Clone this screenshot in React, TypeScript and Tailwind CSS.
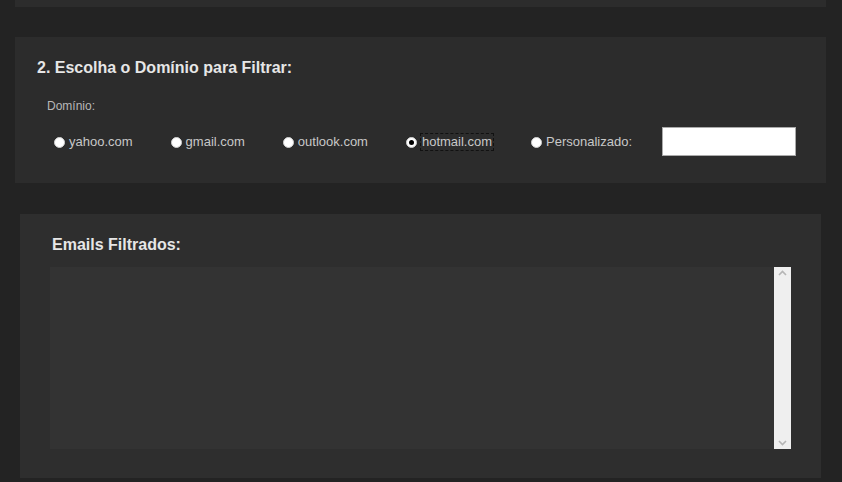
import React from "react";

const domains = [
  { label: "yahoo.com", checked: false },
  { label: "gmail.com", checked: false },
  { label: "outlook.com", checked: false },
  { label: "hotmail.com", checked: true },
  { label: "Personalizado:", checked: false },
];

function Radio({ checked }: { checked: boolean }) {
  return (
    <span className="w-[11px] h-[11px] rounded-full bg-white border border-[#d0d0d0] flex items-center justify-center shrink-0">
      {checked && <span className="w-[5px] h-[5px] rounded-full bg-black" />}
    </span>
  );
}

export default function App() {
  return (
    <div
      className="w-[842px] h-[482px] bg-[#232323] overflow-hidden flex flex-col"
      style={{ fontFamily: '"Liberation Sans", Arial, sans-serif' }}
    >
      <div className="ml-[15px] w-[811px] h-[7px] bg-[#2c2c2c] shrink-0" />
      <div className="ml-[15px] mt-[30px] w-[811px] h-[146px] bg-[#2c2c2c] pt-[21px] shrink-0 flex flex-col">
        <div className="ml-[22px] text-[16px] leading-[20px] font-bold text-[#e6e6e6]">
          2. Escolha o Domínio para Filtrar:
        </div>
        <div className="ml-[32px] mt-[20px] text-[12px] leading-[16px] text-[#b8b8b8]">Domínio:</div>
        <div className="flex items-start mt-[13px]">
          {domains.map((d, i) => (
            <div key={d.label} className={`flex items-center mt-[7px] h-[16px] ${i === 0 ? "ml-[39px]" : "ml-[38px]"}`}>
              <Radio checked={d.checked} />
              <span
                className={`ml-[4px] text-[13px] leading-[16px] text-[#c8c8c8] ${
                  d.checked ? "outline-1 outline-dashed outline-[#111] px-[1px]" : ""
                }`}
              >
                {d.label}
              </span>
            </div>
          ))}
          <div className="ml-[30px] w-[134px] h-[29px] bg-white border border-[#aaaaaa]" />
        </div>
      </div>
      <div className="ml-[20px] mt-[31px] w-[801px] h-[264px] bg-[#2e2e2e] pt-[21px] pl-[30px] shrink-0">
        <div className="ml-[2px] text-[16px] leading-[20px] font-bold text-[#e6e6e6]">Emails Filtrados:</div>
        <div className="mt-[12px] w-[741px] h-[182px] bg-[#333333] flex justify-end">
          <div className="w-[17px] h-full bg-[#efefef] flex flex-col items-center justify-between py-[3px]">
            <svg width="9" height="6" viewBox="0 0 9 6"><path d="M1 5 L4.5 1.5 L8 5" stroke="#b5b5b5" strokeWidth="1.6" fill="none" /></svg>
            <svg width="9" height="6" viewBox="0 0 9 6"><path d="M1 1 L4.5 4.5 L8 1" stroke="#b5b5b5" strokeWidth="1.6" fill="none" /></svg>
          </div>
        </div>
      </div>
    </div>
  );
}
